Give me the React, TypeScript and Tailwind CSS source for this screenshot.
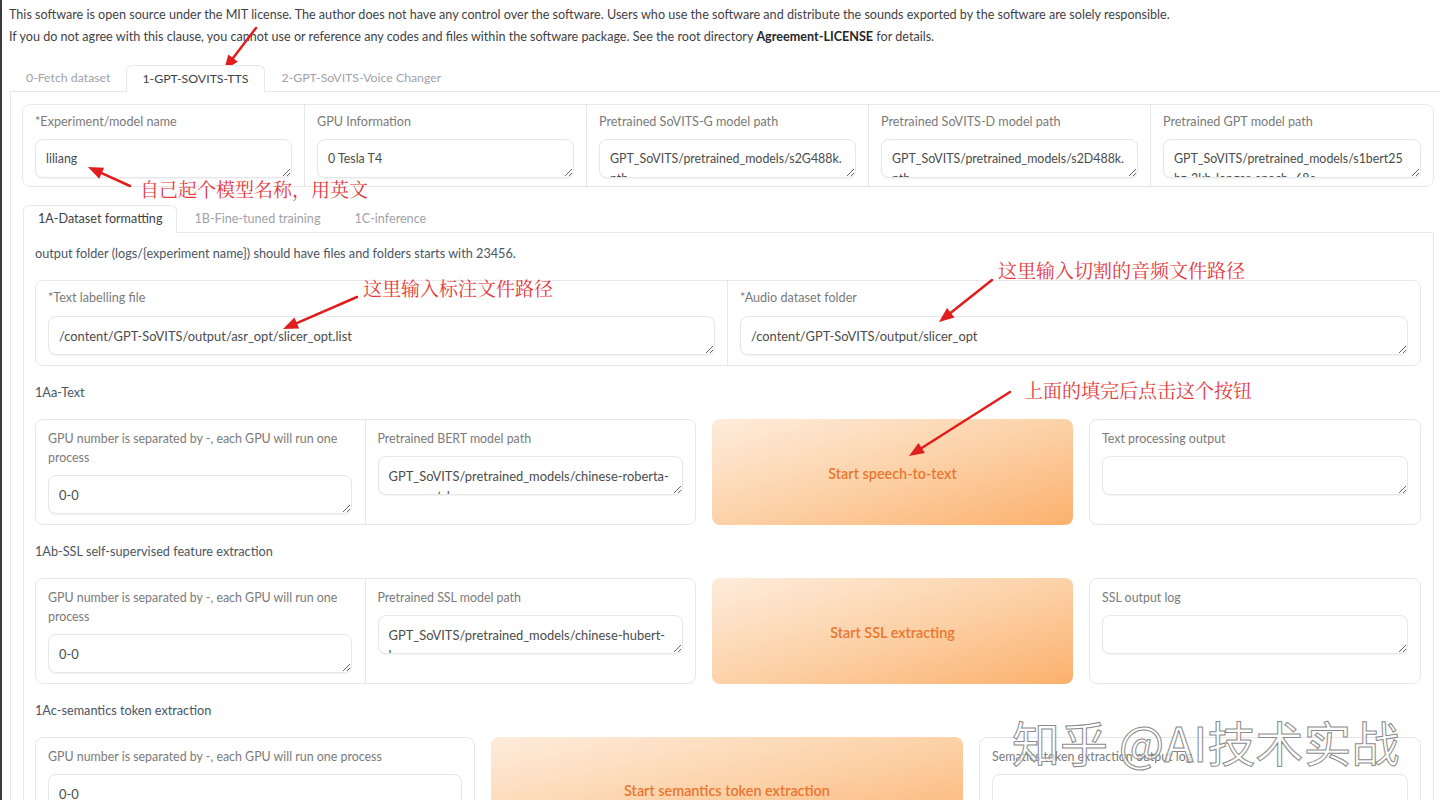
import React from 'react';

const textarea =
  'block h-[39px] w-full resize overflow-hidden rounded-lg border border-[#e5e7eb] bg-white px-[10px] py-[9px] leading-5 text-[#4b4b4b] shadow-[0_1px_2px_rgba(0,0,0,0.06)] outline-none';

const modelFields = [
  { label: '*Experiment/model name', value: 'liliang' },
  { label: 'GPU Information', value: '0 Tesla T4' },
  { label: 'Pretrained SoVITS-G model path', value: 'GPT_SoVITS/pretrained_models/s2G488k.\npth' },
  { label: 'Pretrained SoVITS-D model path', value: 'GPT_SoVITS/pretrained_models/s2D488k.\npth' },
  { label: 'Pretrained GPT model path', value: 'GPT_SoVITS/pretrained_models/s1bert25\nhz-2kh-longer-epoch=68e-step=50232.ckpt' },
];

function Box({ value, small }: { value: string; small?: boolean }) {
  return (
    <textarea
      readOnly
      defaultValue={value}
      className={`${textarea} ${small ? 'text-[12.4px]' : 'text-[12.9px]'}`}
    />
  );
}

const label = 'text-[12.4px] leading-[19px] text-[#7a7a7a]';
const heading = 'mb-px text-[12.7px] leading-[18px] text-[#4b5563]';
const btn =
  'rounded-lg bg-linear-to-br from-[#feecdc] via-[#fcd2a8] to-[#fbb06c] pt-[3px] text-[14.4px] font-semibold text-[#ea7630]';

function StepRow({
  pathLabel,
  pathValue,
  button,
  outLabel,
}: {
  pathLabel: string;
  pathValue: string;
  button: string;
  outLabel: string;
}) {
  return (
    <div className="grid grid-cols-[661fr_361fr_332fr] gap-4">
      <div className="grid grid-cols-2 divide-x divide-[#e5e7eb] rounded-lg border border-[#e5e7eb] bg-white">
        <div className="pl-3 pr-[13px] pt-[9px] pb-[10px]">
          <p className={label}>GPU number is separated by -, each GPU will run one process</p>
          <div className="mt-2">
            <Box value="0-0" />
          </div>
        </div>
        <div className="pl-3 pr-3 pt-[9px] pb-[10px]">
          <p className={label}>{pathLabel}</p>
          <div className="mt-2">
            <Box value={pathValue} />
          </div>
        </div>
      </div>
      <button type="button" className={btn}>
        {button}
      </button>
      <div className="rounded-lg border border-[#e5e7eb] bg-white px-3 pt-[9px] pb-[10px]">
        <p className={label}>{outLabel}</p>
        <div className="mt-2">
          <Box value="" />
        </div>
      </div>
    </div>
  );
}

function Arrow({ x1, y1, x2, y2 }: { x1: number; y1: number; x2: number; y2: number }) {
  const a = Math.atan2(y2 - y1, x2 - x1);
  const len = 15;
  const w = 6;
  const bx = x2 - len * Math.cos(a);
  const by = y2 - len * Math.sin(a);
  const p1 = `${bx + w * Math.sin(a)},${by - w * Math.cos(a)}`;
  const p2 = `${bx - w * Math.sin(a)},${by + w * Math.cos(a)}`;
  return (
    <g>
      <line x1={x1} y1={y1} x2={bx} y2={by} stroke="#e11d1d" strokeWidth={2.5} strokeLinecap="round" />
      <polygon points={`${x2},${y2} ${p1} ${p2}`} fill="#e11d1d" />
    </g>
  );
}

const note =
  "absolute whitespace-nowrap font-['Noto_Serif_CJK_SC','Noto_Sans_CJK_SC',serif] text-[19px] leading-6 text-[#e5383b]";

export default function App() {
  return (
    <div className="relative h-[800px] w-full overflow-hidden border-l-2 border-[#3a3a3a] bg-white font-['Lato',sans-serif] text-[#4b5563]">
      {/* licence notice */}
      <div className="pl-[7px] pt-1 text-[12.6px] leading-[22px] text-[#3f3f46]">
        <p>
          This software is open source under the MIT license. The author does not have any control over the software. Users
          who use the software and distribute the sounds exported by the software are solely responsible.
        </p>
        <p>
          If you do not agree with this clause, you cannot use or reference any codes and files within the software package.
          See the root directory <b className="font-bold text-[#27272a]">Agreement-LICENSE</b> for details.
        </p>
      </div>

      {/* top tabs */}
      <div className="ml-2 mt-[17px] flex h-[26px] text-[12.3px]">
        <div className="border border-transparent px-[15px] leading-[24px] text-[#a1a1aa]">0-Fetch dataset</div>
        <div className="relative z-10 -mb-px rounded-t-md border border-b-0 border-[#e5e7eb] bg-white px-[15px] leading-[25px] text-[#3f3f46]">
          1-GPT-SOVITS-TTS
        </div>
        <div className="border border-transparent px-4 leading-[24px] text-[#a1a1aa]">2-GPT-SoVITS-Voice Changer</div>
      </div>

      {/* outer panel */}
      <div className="ml-2 border-l border-t border-[#e5e7eb] pl-[11px] pr-[6px] pt-3">
        <div className="grid grid-cols-5 divide-x divide-[#e5e7eb] rounded-lg border border-[#e5e7eb]">
          {modelFields.map((f) => (
            <div key={f.label} className="px-3 pt-2 pb-2">
              <p className="text-[12.6px] leading-[18px] text-[#7a7a7a]">{f.label}</p>
              <div className="mt-2">
                <Box value={f.value} small />
              </div>
            </div>
          ))}
        </div>

        {/* inner tabs */}
        <div className="ml-px mt-[18px] flex h-[27px] text-[12.6px]">
          <div className="relative z-10 -mb-px rounded-t-md border border-b-0 border-[#e5e7eb] bg-white px-[14px] leading-[26px] text-[#3f3f46]">
            1A-Dataset formatting
          </div>
          <div className="border border-transparent px-4 leading-[25px] text-[#a1a1aa]">1B-Fine-tuned training</div>
          <div className="border border-transparent px-4 leading-[25px] text-[#a1a1aa]">1C-inference</div>
        </div>

        <div className="ml-px border border-[#e5e7eb] pl-[11px] pr-3 pt-[11px]">
          <div className="flex flex-col gap-[17px]">
            <p className={heading}>
              output folder (logs/{'{'}experiment name{'}'}) should have files and folders starts with 23456.
            </p>

            <div className="grid grid-cols-2 divide-x divide-[#e5e7eb] rounded-lg border border-[#e5e7eb]">
              <div className="px-3 pt-2 pb-[10px]">
                <p className="text-[12.6px] leading-[18px] text-[#7a7a7a]">*Text labelling file</p>
                <div className="mt-[9px]">
                  <Box value="/content/GPT-SoVITS/output/asr_opt/slicer_opt.list" />
                </div>
              </div>
              <div className="px-3 pt-2 pb-[10px]">
                <p className="text-[12.6px] leading-[18px] text-[#7a7a7a]">*Audio dataset folder</p>
                <div className="mt-[9px]">
                  <Box value="/content/GPT-SoVITS/output/slicer_opt" />
                </div>
              </div>
            </div>

            <p className={heading}>1Aa-Text</p>
            <StepRow
              pathLabel="Pretrained BERT model path"
              pathValue={'GPT_SoVITS/pretrained_models/chinese-roberta-\nwwm-ext-large'}
              button="Start speech-to-text"
              outLabel="Text processing output"
            />

            <p className={heading}>1Ab-SSL self-supervised feature extraction</p>
            <StepRow
              pathLabel="Pretrained SSL model path"
              pathValue={'GPT_SoVITS/pretrained_models/chinese-hubert-\nbase'}
              button="Start SSL extracting"
              outLabel="SSL output log"
            />

            <p className={heading}>1Ac-semantics token extraction</p>
            <div className="grid grid-cols-[440fr_472fr_442fr] gap-4">
              <div className="rounded-lg border border-[#e5e7eb] bg-white px-3 pt-[9px] pb-[10px]">
                <p className={label}>GPU number is separated by -, each GPU will run one process</p>
                <div className="mt-2">
                  <Box value="0-0" />
                </div>
              </div>
              <button type="button" className={`${btn} h-[105px]`}>
                Start semantics token extraction
              </button>
              <div className="rounded-lg border border-[#e5e7eb] bg-white px-3 pt-[9px] pb-[10px]">
                <p className={label}>Sematics token extraction output log</p>
                <div className="mt-2">
                  <Box value="" />
                </div>
              </div>
            </div>
          </div>
        </div>
      </div>

      {/* annotations */}
      <svg className="pointer-events-none absolute left-0 top-0" width={1440} height={800}>
        <Arrow x1={254} y1={28} x2={222} y2={70} />
        <Arrow x1={128} y1={186} x2={86} y2={167} />
        <Arrow x1={355} y1={297} x2={281} y2={329} />
        <Arrow x1={990} y1={280} x2={937} y2={322} />
        <Arrow x1={1008} y1={392} x2={907} y2={456} />
      </svg>
      <span className={`${note} left-[138px] top-[177px]`}>自己起个模型名称，用英文</span>
      <span className={`${note} left-[361px] top-[276px]`}>这里输入标注文件路径</span>
      <span className={`${note} left-[996px] top-[258px]`}>这里输入切割的音频文件路径</span>
      <span className={`${note} left-[1022px] top-[378px]`}>上面的填完后点击这个按钮</span>

      <span className="pointer-events-none absolute left-[1010px] top-[712px] whitespace-nowrap font-['Noto_Sans_CJK_SC',sans-serif] text-[48px] leading-[58px] text-white/70 [-webkit-text-stroke:1px_#8a8a8a]">
        知乎 @AI技术实战
      </span>
    </div>
  );
}
